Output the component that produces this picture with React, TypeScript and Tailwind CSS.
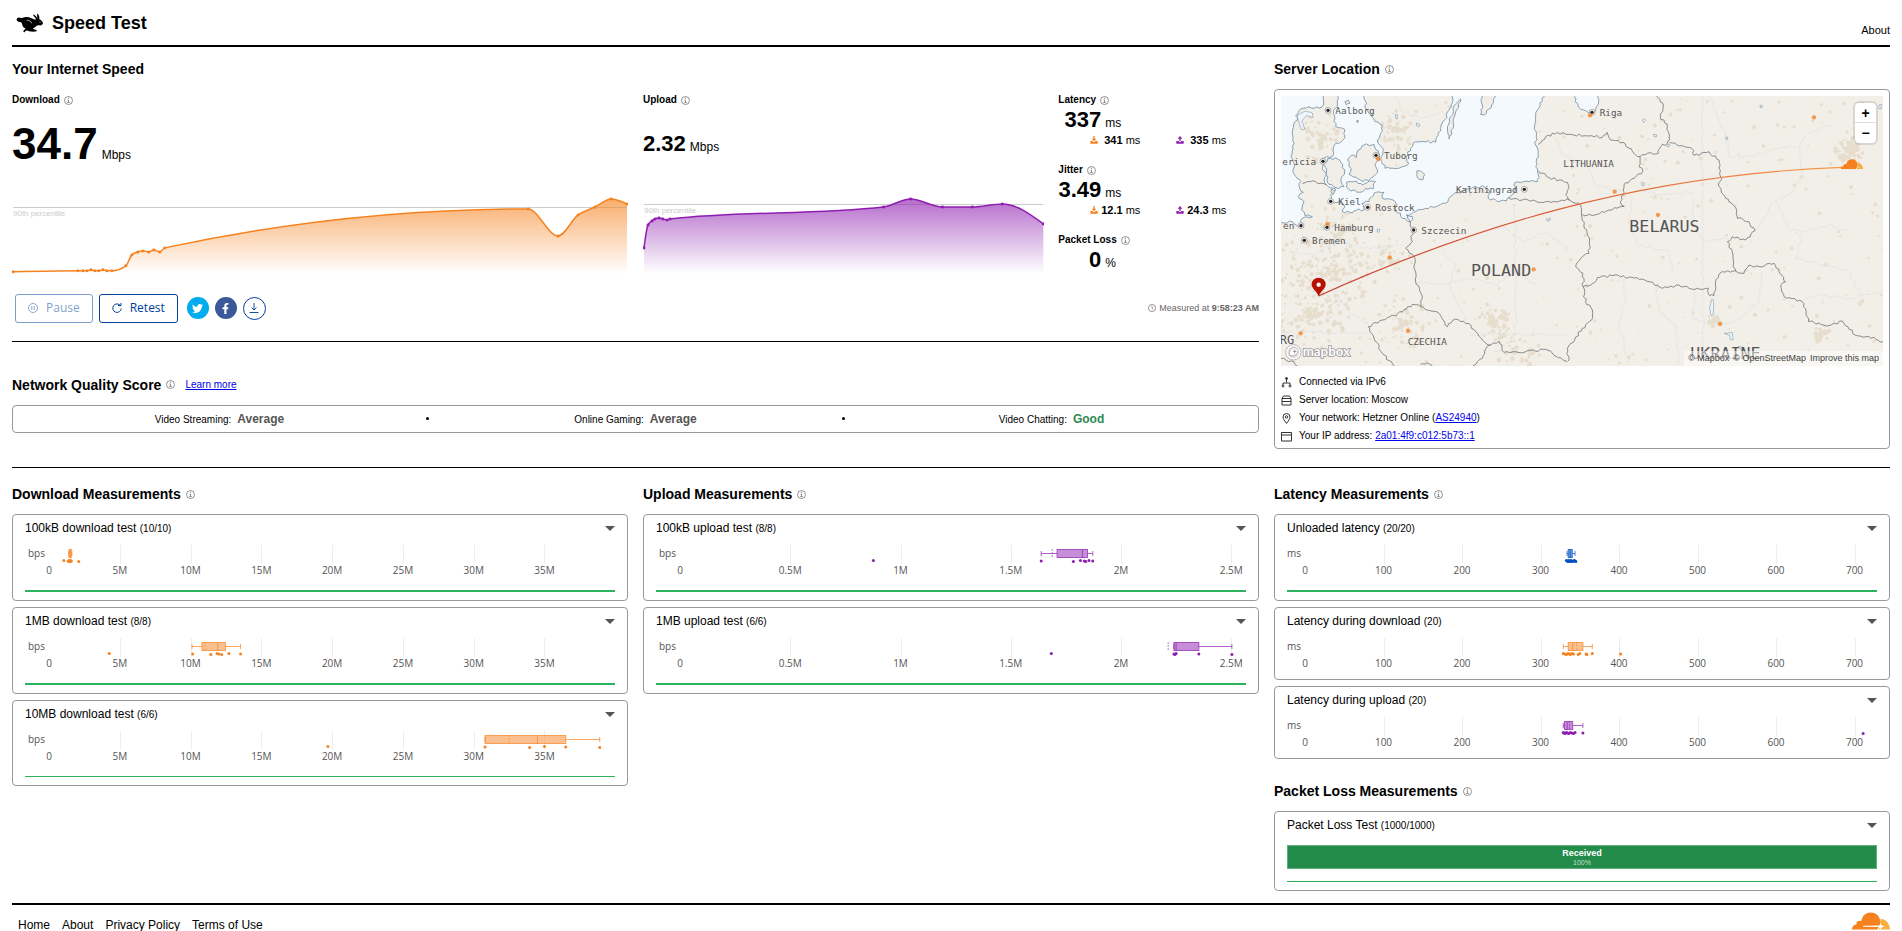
import type { ReactNode } from "react";
import { FaFacebookF, FaTwitter } from "react-icons/fa";

/* ------------------------------------------------------------------ */
/*  Types and data                                                    */
/* ------------------------------------------------------------------ */

type Point = [number, number];

interface Stats {
  low: number;
  q1: number;
  median: number;
  mean: number;
  q3: number;
  high: number;
}

interface Scale {
  unit: string;
  origin: number;
  perUnit: number;
  ticks: { value: number; label: string }[];
}

interface Measurement {
  title: string;
  count: string;
  scale: Scale;
  color: string;
  stats: Stats;
  dots: number[];
  progress?: "thick" | "thin";
}

const ORANGE = "#f6821f";
const PURPLE = "#8e1eb0";
const BLUE = "#0051c3";

const downloadScale: Scale = {
  unit: "bps",
  origin: 24,
  perUnit: 14.157,
  ticks: [0, 5, 10, 15, 20, 25, 30, 35].map((v) => ({
    value: v,
    label: v ? `${v}M` : "0",
  })),
};

const uploadScale: Scale = {
  unit: "bps",
  origin: 24,
  perUnit: 220.5,
  ticks: [0, 0.5, 1, 1.5, 2, 2.5].map((v) => ({
    value: v,
    label: v ? `${v}M` : "0",
  })),
};

const latencyScale: Scale = {
  unit: "ms",
  origin: 18,
  perUnit: 0.785,
  ticks: [0, 100, 200, 300, 400, 500, 600, 700].map((v) => ({
    value: v,
    label: `${v}`,
  })),
};

const downloads: Measurement[] = [
  {
    title: "100kB download test",
    count: "(10/10)",
    scale: downloadScale,
    color: ORANGE,
    stats: { low: 1.38, q1: 1.42, median: 1.48, mean: 1.5, q3: 1.58, high: 1.62 },
    dots: [1.05, 1.35, 1.4, 1.42, 1.48, 1.5, 1.52, 1.58, 2.1],
    progress: "thick",
  },
  {
    title: "1MB download test",
    count: "(8/8)",
    scale: downloadScale,
    color: ORANGE,
    stats: { low: 10.1, q1: 10.8, median: 11.92, mean: 11.03, q3: 12.47, high: 13.53 },
    dots: [4.25, 10.15, 11.43, 11.87, 12, 12.2, 12.7, 13.53],
    progress: "thick",
  },
  {
    title: "10MB download test",
    count: "(6/6)",
    scale: downloadScale,
    color: ORANGE,
    stats: { low: 30.8, q1: 30.8, median: 34.5, mean: 32.5, q3: 36.5, high: 38.9 },
    dots: [19.7, 30.8, 33.95, 35, 36.5, 38.9],
    progress: "thin",
  },
];

const uploads: Measurement[] = [
  {
    title: "100kB upload test",
    count: "(8/8)",
    scale: uploadScale,
    color: PURPLE,
    stats: { low: 1.638, q1: 1.71, median: 1.825, mean: 1.688, q3: 1.848, high: 1.872 },
    dots: [0.877, 1.638, 1.784, 1.816, 1.834, 1.84, 1.855, 1.872],
    progress: "thick",
  },
  {
    title: "1MB upload test",
    count: "(6/6)",
    scale: uploadScale,
    color: PURPLE,
    stats: { low: 2.24, q1: 2.24, median: 2.25, mean: 2.214, q3: 2.353, high: 2.503 },
    dots: [1.684, 2.24, 2.245, 2.25, 2.353, 2.503],
    progress: "thick",
  },
];

const latencies: Measurement[] = [
  {
    title: "Unloaded latency",
    count: "(20/20)",
    scale: latencyScale,
    color: BLUE,
    stats: { low: 333.8, q1: 335.3, median: 337.5, mean: 338.5, q3: 340.5, high: 344 },
    dots: [333, 334, 335, 336, 337, 338, 339, 340, 341, 343, 344, 345],
    progress: "thick",
  },
  {
    title: "Latency during download",
    count: "(20)",
    scale: latencyScale,
    color: ORANGE,
    stats: { low: 329, q1: 335.3, median: 341, mean: 346, q3: 354, high: 366 },
    dots: [329, 331, 333, 335, 337, 338, 340, 342, 348, 350, 358, 359, 366, 402],
  },
  {
    title: "Latency during upload",
    count: "(20)",
    scale: latencyScale,
    color: PURPLE,
    stats: { low: 329, q1: 330.5, median: 334, mean: 337, q3: 341, high: 354 },
    dots: [329, 330, 331, 333, 334, 336, 338, 340, 342, 344, 354, 711],
  },
];

const downloadSeries: Point[] = [
  [13, 271], [78, 270], [83, 270], [87, 270], [91, 269], [95, 270], [99, 270],
  [103, 269], [107, 270], [112, 270], [126, 265], [132, 254], [138, 251],
  [143, 250], [149, 251], [154, 249], [160, 251], [165, 247], [529, 208],
  [559, 235], [579, 214], [596, 206], [612, 198], [628, 203],
];

const uploadSeries: Point[] = [
  [644, 247], [648, 224], [652, 220], [655, 218], [659, 217], [663, 218],
  [667, 219], [670, 218], [884, 206], [911, 198], [943, 206], [973, 206],
  [1003, 203], [1044, 223],
];

/* ------------------------------------------------------------------ */
/*  Curve helpers                                                     */
/* ------------------------------------------------------------------ */

// Monotone cubic interpolation through the points
function monotone(points: Point[]): string {
  const n = points.length;
  const slope = (a: Point, b: Point) => (b[1] - a[1]) / (b[0] - a[0]);
  const t = points.map((p, i) => {
    if (i === 0 || i === n - 1) return 0;
    const h0 = p[0] - points[i - 1][0];
    const h1 = points[i + 1][0] - p[0];
    const s0 = slope(points[i - 1], p);
    const s1 = slope(p, points[i + 1]);
    const mid = (s0 * h1 + s1 * h0) / (h0 + h1);
    return (
      (Math.sign(s0) + Math.sign(s1)) *
      Math.min(Math.abs(s0), Math.abs(s1), 0.5 * Math.abs(mid))
    );
  });
  t[0] = (3 * slope(points[0], points[1]) - t[1]) / 2;
  t[n - 1] = (3 * slope(points[n - 2], points[n - 1]) - t[n - 2]) / 2;

  let d = `M${points[0][0]} ${points[0][1]}`;
  for (let i = 1; i < n; i++) {
    const [x0, y0] = points[i - 1];
    const [x1, y1] = points[i];
    const dx = (x1 - x0) / 3;
    d += `C${x0 + dx} ${y0 + dx * t[i - 1]} ${x1 - dx} ${y1 - dx * t[i]} ${x1} ${y1}`;
  }
  return d;
}

function random(seed: number) {
  let s = seed;
  return () => {
    s = (s * 16807) % 2147483647;
    return s / 2147483647;
  };
}

// Turns "x,y x,y ..." into a jagged coast or border line
function rough(list: string, amp: number, close = false): string {
  const pts = list.split(" ").map((p) => p.split(",").map(Number) as Point);
  if (close) pts.push(pts[0]);
  const rnd = random(list.length * 7919 + pts[0][0]);
  let d = `M${pts[0][0]} ${pts[0][1]}`;
  for (let i = 1; i < pts.length; i++) {
    const [x0, y0] = pts[i - 1];
    const [x1, y1] = pts[i];
    const len = Math.hypot(x1 - x0, y1 - y0);
    const steps = Math.max(1, Math.round(len / 8));
    for (let k = 1; k < steps; k++) {
      const f = k / steps;
      const off = (rnd() - 0.5) * 2 * amp;
      const x = x0 + (x1 - x0) * f - ((y1 - y0) / len) * off;
      const y = y0 + (y1 - y0) * f + ((x1 - x0) / len) * off;
      d += `L${x.toFixed(1)} ${y.toFixed(1)}`;
    }
    d += `L${x1} ${y1}`;
  }
  return close ? d + "Z" : d;
}

/* ------------------------------------------------------------------ */
/*  Small parts                                                       */
/* ------------------------------------------------------------------ */

function InfoIcon() {
  return (
    <svg viewBox="0 0 18 18" className="h-[9px] w-[9px] shrink-0" fill="none" stroke="#777" strokeWidth="1.6" aria-hidden="true">
      <circle cx="9" cy="9" r="8" />
      <path d="M7 8h2v5M6.500 13h5" />
      <path d="M8 4.500h2" strokeWidth="2" />
    </svg>
  );
}

function Heading({ children }: { children: ReactNode }) {
  return (
    <h2 className="flex items-center gap-[5px] text-sm leading-5 font-bold">
      {children}
      <InfoIcon />
    </h2>
  );
}

function Label({ children }: { children: ReactNode }) {
  return (
    <h3 className="flex items-center gap-1 text-[10px] leading-4 font-bold">
      {children}
      <InfoIcon />
    </h3>
  );
}

function RabbitLogo() {
  return (
    <svg viewBox="46 38 84 60" className="h-5 w-7" aria-hidden="true">
      <path d="M48 60c-1-6 4-10 9-8 3 0 5 1 7 1 9-4 20-4 27 0 5 2 8 4 12 5l3-3c-4-4-8-8-9-13 6 2 10 7 13 11-1-5-1-9 0-14 5 4 7 11 6 18 5 2 9 6 11 11-1 5-5 8-11 7-4 0-6 1-8 1-3 3-6 6-11 8 2 3 4 4 8 4 3 0 4 3 3 5-8 2-16 1-23 0-3-2-6-3-8-2-3 0-4 2-5 5-2 0-4-1-4-3 1-4 5-7 8-8-5-2-8-4-10-8-1-4-2-8-5-11-5 0-11-2-13-6z" />
      <path d="M78 60c7-1 13 2 15 9" fill="none" stroke="#fff" strokeWidth="2" />
      <circle cx="118" cy="65" r="1.500" fill="#fff" />
    </svg>
  );
}

function CloudMark({ className }: { className: string }) {
  return (
    <svg viewBox="0 0 112 52" className={className} aria-hidden="true">
      <path d="M0 51c0-9 5-14 13-15-1-8 7-13 14-9C31 9 42 1 55 1c15 0 25 9 28 23 3 6 1 12-1 15L33 40v3l46 1-5 7z" fill="#f6821f" />
      <path d="M84 20c15-1 27 12 28 31H78l6-9 8-1-7-3z" fill="#fbad41" />
      <path d="m84 31 3 8 9 3-9 3-3 7-3-7-6-3 6-3z" fill="#fff" />
    </svg>
  );
}

function TransferIcon({ up, color }: { up?: boolean; color: string }) {
  return (
    <svg viewBox="0 0 24 24" className="h-2 w-2" fill={color} aria-hidden="true">
      <path d="M1 15h6l5 4 5-4h6v8H1z" />
      <path d={up ? "M12 0l7 8h-5v7h-4V8H5z" : "M10 0h4v8h5l-7 8-7-8h5z"} />
    </svg>
  );
}

/* ------------------------------------------------------------------ */
/*  Speed charts                                                      */
/* ------------------------------------------------------------------ */

interface AreaChartProps {
  id: string;
  points: Point[];
  color: string;
  viewBox: string;
  percentile: number;
}

function AreaChart({ id, points, color, viewBox, percentile }: AreaChartProps) {
  const line = monotone(points);
  const first = points[0][0];
  const last = points[points.length - 1][0];
  return (
    <svg viewBox={viewBox} className="block h-auto w-full">
      <defs>
        <linearGradient id={id} x1="0" x2="0" y1="198" y2="273" gradientUnits="userSpaceOnUse">
          <stop offset="0" stopColor={color} stopOpacity="0.65" />
          <stop offset="1" stopColor={color} stopOpacity="0" />
        </linearGradient>
      </defs>
      <path d={`M${first} ${percentile + 0.5}H${last}`} stroke="#ccc" />
      <text x={first} y={percentile + 9} fill="#ccc" fontSize="8">
        90th percentile
      </text>
      <path d={`${line}V273H${first}Z`} fill={`url(#${id})`} />
      <path d={line} fill="none" stroke={color} strokeWidth="1.500" />
      {points.map(([x, y]) => (
        <circle key={x} cx={x} cy={y} r="1.500" fill={color} />
      ))}
    </svg>
  );
}

function SpeedResult({ label, children, chart }: { label: string; children: ReactNode; chart: ReactNode }) {
  return (
    <div>
      <Label>{label}</Label>
      <div className="flex h-[76px] items-center pb-1">{children}</div>
      {chart}
    </div>
  );
}

interface LatencyResultProps {
  label: string;
  value: string;
  unit: string;
  down?: string;
  up?: string;
}

function LatencyResult({ label, value, unit, down, up }: LatencyResultProps) {
  return (
    <div>
      <Label>{label}</Label>
      <p className="flex items-baseline gap-1 leading-6">
        <span className="w-[43px] text-right text-[22px] font-bold">{value}</span>
        <span className="text-xs">{unit}</span>
      </p>
      {down && up && (
        <div className="flex gap-9 pl-8 text-[11px] leading-4">
          <p className="flex w-[50px] items-center justify-between whitespace-nowrap">
            <TransferIcon color={ORANGE} />
            <span><b>{down}</b> ms</span>
          </p>
          <p className="flex w-[50px] items-center justify-between whitespace-nowrap">
            <TransferIcon up color={PURPLE} />
            <span><b>{up}</b> ms</span>
          </p>
        </div>
      )}
    </div>
  );
}

/* ------------------------------------------------------------------ */
/*  Measurement cards                                                 */
/* ------------------------------------------------------------------ */

function BoxPlot({ scale, stats, dots, color }: Measurement) {
  const x = (v: number) => scale.origin + v * scale.perUnit;
  return (
    <svg viewBox="0 0 590 34" className="mt-2 block h-auto w-full font-['Open_Sans',sans-serif]">
      <g fill="#555" fontSize="10">
        <text x={scale.origin - 4} y="13" textAnchor="end">{scale.unit}</text>
        {scale.ticks.map((t) => (
          <text key={t.label} x={x(t.value)} y="30" textAnchor="middle">{t.label}</text>
        ))}
      </g>
      {scale.ticks.slice(1).map((t) => (
        <path key={t.label} d={`M${Math.round(x(t.value)) + 0.5} 1v19`} stroke="#eee" />
      ))}
      <g stroke={color} strokeOpacity="0.7">
        <path d={`M${x(stats.low)} 9.500H${x(stats.q1)}M${x(stats.q3)} 9.500H${x(stats.high)}M${x(stats.low)} 7v5M${x(stats.high)} 7v5`} />
        <rect x={x(stats.q1)} y="5.500" width={x(stats.q3) - x(stats.q1)} height="8" fill={color} fillOpacity="0.5" />
        <path d={`M${x(stats.median)} 6v8`} />
        <path d={`M${x(stats.mean)} 5v9`} strokeDasharray="2 1" strokeOpacity="0.6" />
      </g>
      {dots.map((v, i) => (
        <circle key={i} cx={x(v)} cy={16.5 + (i % 3) * 0.5} r="1.500" fill={color} />
      ))}
    </svg>
  );
}

function Card({ title, count, children }: { title: string; count: string; children: ReactNode }) {
  return (
    <section className="rounded border border-[#999] px-3 pt-[5px] pb-2">
      <div className="flex items-center justify-between">
        <h3 className="text-xs leading-4">
          {title} <span className="text-[10px] leading-none">{count}</span>
        </h3>
        <button aria-label={`Show details of ${title}`}>
          <svg viewBox="0 0 10 5" className="h-[5px] w-2.5" fill="#555">
            <path d="M0 0h10L5 5z" />
          </svg>
        </button>
      </div>
      {children}
    </section>
  );
}

function MeasurementCard(props: Measurement) {
  return (
    <Card title={props.title} count={props.count}>
      <BoxPlot {...props} />
      {props.progress === "thick" && <div className="mt-3 h-0.5 bg-[#2db35e]" />}
      {props.progress === "thin" && <div className="mt-3 h-px bg-[#2db35e]" />}
    </Card>
  );
}

/* ------------------------------------------------------------------ */
/*  Server map                                                        */
/* ------------------------------------------------------------------ */

const SEAS = [
  "25,20 165,20 163,45 158,66 135,70 120,65 95,72 80,92 85,105 74,120 72,190 66,215 75,235 72,262 95,290 92,310 103,322 88,335 105,350 98,375 108,392 130,395 100,400 90,428 70,410 45,414 25,410",
  "205,20 205,55 193,85 200,125 226,132 228,152 215,172 196,180 190,215 165,220 160,250 170,262 165,285 178,305 200,312 185,330 186,350 205,352 225,360 220,380 250,384 262,376 285,375 278,355 290,348 300,350 315,325 345,322 340,340 372,345 385,362 378,378 395,385 400,400 425,410 430,395 412,390 470,370 530,355 550,330 600,312 640,302 660,315 658,340 685,350 712,348 735,325 738,292 805,290 808,270 800,245 808,215 800,180 800,110 805,75 830,20 555,20 540,75 515,130 500,172 440,170 425,190 410,215 420,235 400,245 348,250 335,222 342,200 325,165 335,145 340,122 318,110 300,85 290,70 290,50 275,20",
  "915,20 918,50 935,72 960,84 978,80 988,58 988,20",
];

const ISLANDS = [
  "166,232 185,220 205,222 222,240 226,268 216,290 225,305 200,308 180,298 172,270",
  "236,225 248,210 262,218 268,195 285,180 315,178 330,205 332,225 318,240 326,262 305,280 282,290 268,282 240,268 246,250",
  "232,292 262,288 282,300 300,288 320,290 312,312 290,310 272,322 238,312",
  "575,42 560,80 552,130 540,162 536,140 545,95 562,55",
  "636,20 640,60 635,88 645,90 668,60 680,20",
  "443,258 455,258 467,268 462,284 445,278",
  "228,50 238,46 243,54 232,60",
  "262,108 268,106 266,114",
  "187,312 197,318 193,328 186,322",
];

const LAKES = [
  "380,88 386,90 384,102 379,98",
  "442,114 452,118 450,126 443,122",
  "85,90 110,78 130,84 132,98 112,92 98,108 108,132 98,135 90,112",
  "1120,105 1127,101 1130,106 1124,113",
  "1154,148 1162,149 1163,155 1155,155",
  "1195,177 1202,178 1200,186 1194,184",
  "1474,60 1480,62 1479,68 1473,67",
  "1370,157 1376,156 1376,163 1371,164",
  "1118,292 1127,295 1124,303 1118,300",
  "832,402 844,400 842,407 835,408",
  "1328,643 1334,645 1333,690 1327,692 1322,670",
  "1365,745 1390,743 1392,765 1384,764 1382,750",
  "325,432 333,434 330,442 324,440",
  "1408,784 1425,788 1420,798",
  "1830,60 1838,58 1836,72 1829,70",
];

const BORDERS = [
  "808,178 830,155 865,142 900,148 968,152 1000,157 1014,142 1025,165 1062,172 1095,205 1113,215",
  "1162,33 1182,55 1174,95 1195,125 1202,165 1195,175 1175,185 1168,205 1135,205 1113,215 1110,245 1122,258 1095,280 1065,300 1062,330 1054,350 1066,364 1052,366 1020,375 985,388 938,388",
  "1202,172 1240,182 1268,190 1275,212 1320,200 1350,225 1358,280 1348,300 1370,340 1402,372 1405,400 1440,410 1458,437 1430,465 1390,455 1375,470 1392,510 1392,545 1400,558",
  "1400,558 1360,560 1340,590 1335,632 1322,632 1318,610 1260,610 1230,600 1180,610 1120,582 1030,572 985,578 965,600 942,605",
  "1400,558 1425,565 1440,540 1470,545 1515,535 1530,560 1550,590 1535,600 1545,635 1600,650 1618,710 1680,722 1720,708 1758,750 1800,755 1842,770",
  "718,338 760,345 830,350 903,345",
  "808,258 840,278 895,292 900,310 890,330 905,348 935,360 945,420 962,465 960,505 935,520 920,545 942,565 942,605 950,650 970,675 968,705 940,730 895,790 898,828",
  "416,390 430,430 430,470 410,490 435,515 440,590 460,640 455,665",
  "455,665 430,658 400,680 340,705 298,725 315,760 345,810 375,843",
  "455,665 510,685 535,725 560,702 600,715 620,740 640,765 665,780 690,768 705,802 740,800 770,800 830,793 868,818 895,830",
  "665,780 650,792 640,820 612,842",
  "100,295 140,290 172,300",
  "36,820 75,830 85,843",
  "455,838 475,834 490,842",
];

const REGIONS = [
  "620,33 630,70 600,110 640,130",
  "380,33 400,80 460,100 520,80",
  "1320,33 1345,90 1370,150 1380,215 1450,215 1520,190 1590,185 1620,140 1690,120",
  "1590,185 1600,270 1560,330 1510,350 1480,410 1460,437",
  "860,160 880,210 960,250 980,300 1060,320",
  "1090,340 1080,420 1110,480 1200,500 1210,570",
  "1120,320 1200,330 1270,320 1275,420 1300,470 1380,460",
  "1520,345 1560,430 1600,440 1680,420 1740,440",
  "1600,440 1580,520 1660,540 1740,560 1780,640",
  "1060,580 1070,640 1050,720 1080,840",
  "1160,600 1170,680 1220,720 1230,840",
  "1280,610 1270,700 1330,720 1400,710 1470,650",
  "1470,650 1480,560",
  "1600,650 1640,630 1740,640 1842,620",
  "520,500 560,540 540,600 580,680 590,710",
  "440,590 520,600 600,580 680,600 740,560 800,600",
  "740,33 739,300",
  "739,360 739,740",
  "36,740 300,745",
  "600,748 900,750",
  "640,440 700,420 760,470 830,440 900,500",
  "230,500 250,560 200,620 240,680 300,720",
  "60,500 130,510 200,470 300,490 400,480",
  "1300,33 1302,843",
];

// Population patches: centre, spread and how many
const PATCHES: [number, number, number, number][] = [
  [170, 560, 150, 190],
  [120, 690, 110, 120],
  [210, 440, 90, 50],
  [360, 520, 40, 40],
  [400, 710, 80, 70],
  [670, 715, 50, 80],
  [730, 800, 90, 60],
  [1735, 195, 45, 110],
  [1330, 705, 18, 30],
  [1650, 745, 25, 30],
  [150, 170, 60, 50],
  [380, 130, 70, 60],
  [290, 210, 30, 25],
  [110, 130, 40, 15],
];

function patchPath(): string {
  const rnd = random(4242);
  let d = "";
  const add = (x: number, y: number, s: number) => {
    d += `M${x.toFixed(0)} ${y.toFixed(0)}l${s.toFixed(1)} ${(-s / 2).toFixed(1)} ${(s / 2).toFixed(1)} ${s.toFixed(1)} ${(-s).toFixed(1)} ${(s / 2).toFixed(1)}z`;
  };
  for (const [cx, cy, spread, count] of PATCHES) {
    for (let i = 0; i < count; i++) {
      const a = rnd() * Math.PI * 2;
      const r = rnd() * spread;
      add(cx + Math.cos(a) * r, cy + Math.sin(a) * r, 3 + rnd() * 8);
    }
  }
  for (let i = 0; i < 330; i++) {
    add(36 + rnd() * 1806, 33 + rnd() * 810, 3 + rnd() * 7);
  }
  return d;
}

const CITIES: { name: string; x: number; y: number; dot: Point; end?: boolean }[] = [
  { name: "Aalborg", x: 199, y: 87, dot: [177, 76] },
  { name: "Tuborg", x: 345, y: 222, dot: [321, 211] },
  { name: "ericia", x: 141, y: 239, dot: [162, 229], end: true },
  { name: "Kiel", x: 208, y: 359, dot: [185, 349] },
  { name: "Rostock", x: 319, y: 377, dot: [296, 367] },
  { name: "en", x: 76, y: 433, dot: [96, 422], end: true },
  { name: "Hamburg", x: 196, y: 438, dot: [174, 427] },
  { name: "Bremen", x: 129, y: 476, dot: [106, 466] },
  { name: "Szczecin", x: 457, y: 446, dot: [434, 435] },
  { name: "Kaliningrad", x: 746, y: 323, dot: [766, 313], end: true },
  { name: "Riga", x: 992, y: 93, dot: [969, 82] },
];

const COLOS: Point[] = [
  [327, 222], [176, 417], [362, 517], [794, 553], [95, 745], [417, 738],
  [963, 91], [1037, 320], [1167, 390], [1353, 717], [1635, 97],
];

function ServerMap() {
  return (
    <div className="relative overflow-hidden">
      <svg
        viewBox="36 33 1806 810"
        className="block h-auto w-full bg-[#f2efe9] font-['DejaVu_Sans_Mono',monospace]"
        role="img"
        aria-label="Map with the server and your location"
      >
        <defs>
          <linearGradient id="route" x1="150" x2="1720" y1="0" y2="0" gradientUnits="userSpaceOnUse">
            <stop offset="0" stopColor="#c8372d" />
            <stop offset="0.5" stopColor="#e0623b" />
            <stop offset="1" stopColor="#f79a4b" />
          </linearGradient>
        </defs>
        <path d={patchPath()} fill="#e6ddcd" />
        <g fill="none" stroke="#e6e5e5" strokeWidth="3">
          {REGIONS.map((r) => <path key={r} d={rough(r, 4)} />)}
        </g>
        <g stroke="#87a0b0" strokeWidth="3" strokeLinejoin="round">
          {SEAS.map((s) => <path key={s} d={rough(s, 4, true)} fill="#f4f9fd" />)}
          {ISLANDS.map((s) => <path key={s} d={rough(s, 4, true)} fill="#f1eee7" />)}
          {LAKES.map((s) => <path key={s} d={rough(s, 1, true)} fill="#eef5fa" strokeWidth="2" />)}
        </g>
        <g fill="none" stroke="#777" strokeWidth="2.500" strokeLinejoin="round">
          {BORDERS.map((b) => <path key={b} d={rough(b, 4)} />)}
        </g>

        <g fill="#555" fontSize="28">
          {CITIES.map((c) => (
            <g key={c.name}>
              <circle cx={c.dot[0]} cy={c.dot[1]} r="9" fill="#f4f4f2" stroke="#888" strokeWidth="2" />
              <circle cx={c.dot[0]} cy={c.dot[1]} r="5" fill="#222" />
              <text x={c.x} y={c.y} textAnchor={c.end ? "end" : "start"}>{c.name}</text>
            </g>
          ))}
          <text x="883" y="246">LITHUANIA</text>
          <text x="416" y="779">CZECHIA</text>
        </g>
        <g fill="#555" fontSize="50">
          <text x="606" y="573">POLAND</text>
          <text x="1081" y="440">BELARUS</text>
          <text x="1264" y="822">UKRAINE</text>
          <text x="32" y="778" fontSize="36">RG</text>
        </g>

        <path d="M150 632C600 430 1100 270 1720 247" fill="none" stroke="url(#route)" strokeWidth="3.500" />
        {COLOS.map(([x, y]) => (
          <circle key={x} cx={x} cy={y} r="6.500" fill="#f6821f" fillOpacity="0.8" />
        ))}
        <path d="M149 634c-6-16-21-22-21-36a21 20 0 0 1 42 0c0 14-15 20-21 36z" fill="#b71100" />
        <circle cx="149" cy="599" r="6.500" fill="#fff" />
        <svg x="1715" y="222" width="68" height="31" viewBox="0 0 112 52">
          <path d="M0 51c0-9 5-14 13-15-1-8 7-13 14-9C31 9 42 1 55 1c15 0 25 9 28 23 3 6 1 12-1 15l-8 12z" fill="#f6821f" />
          <path d="M84 20c15-1 27 12 28 31H78l6-9 8-1-7-3z" fill="#fbad41" />
        </svg>

        {/* mapbox mark */}
        <circle cx="73" cy="802" r="20" fill="#ccc" fillOpacity="0.5" stroke="#fff" strokeWidth="5" />
        <circle cx="73" cy="802" r="23" fill="none" stroke="#999" strokeWidth="2" />
        <path d="M62 812c-3-14 4-24 15-24 8 0 12 8 9 15-4 8-13 10-24 9z" fill="#fff" stroke="#999" strokeWidth="2" />
        <path d="m77 792 2 5 5 2-5 2-2 5-2-5-5-2 5-2z" fill="#999" />
        <text x="101" y="812" fontSize="40" fontFamily="Lato, sans-serif" fontWeight="700" fill="#fff" stroke="#999" strokeWidth="5" paintOrder="stroke">
          mapbox
        </text>
      </svg>

      <div className="absolute top-[7px] right-[7px] flex w-[21px] flex-col divide-y divide-[#ddd] rounded-sm bg-white text-center text-sm leading-5 font-bold shadow-[0_0_0_2px_rgba(0,0,0,0.1)]">
        <button className="h-5" aria-label="Zoom in">+</button>
        <button className="h-5" aria-label="Zoom out">−</button>
      </div>
      <p className="absolute right-0 bottom-0 flex gap-1 bg-white/50 px-1 text-[9px] leading-[15px] text-[#404040]">
        <a href="#mapbox">© Mapbox</a>
        <a href="#osm">© OpenStreetMap</a>
        <a href="#improve">Improve this map</a>
      </p>
    </div>
  );
}

function InfoRow({ icon, children }: { icon: ReactNode; children: ReactNode }) {
  return (
    <li className="flex items-center gap-[7px]">
      <svg viewBox="0 0 22 22" className="h-[11px] w-[11px]" fill="none" stroke="#333" strokeWidth="2" aria-hidden="true">
        {icon}
      </svg>
      <span>{children}</span>
    </li>
  );
}

function Quality({ label, value, good }: { label: string; value: string; good?: boolean }) {
  return (
    <p className="flex flex-1 items-baseline justify-center gap-1.5 text-[10px]">
      {label}
      <b className={good ? "text-xs text-[#2c8a4f]" : "text-xs text-[#555]"}>{value}</b>
    </p>
  );
}

/* ------------------------------------------------------------------ */
/*  Page                                                              */
/* ------------------------------------------------------------------ */

export default function App() {
  return (
    <div className="min-h-screen bg-white px-3 font-['Liberation_Sans',Arial,sans-serif] text-black">
      {/* ---- HEADER ---- */}
      <header className="flex items-end justify-between border-b-2 border-black pt-2.5 pb-[7px]">
        <div className="flex items-center gap-2 pb-0.5">
          <div className="pl-1"><RabbitLogo /></div>
          <h1 className="text-lg leading-[26px] font-bold">Speed Test</h1>
        </div>
        <a href="#about" className="text-[11px] leading-4">About</a>
      </header>

      {/* ---- RESULTS ---- */}
      <main>
        <div className="grid grid-cols-3 gap-[15px] border-b border-black pt-3 pb-[18px]">
          <div className="col-span-2">
            <h2 className="text-sm leading-5 font-bold">Your Internet Speed</h2>
            <div className="mt-[13px] grid grid-cols-2 gap-[15px]">
              <SpeedResult
                label="Download"
                chart={<AreaChart id="down" points={downloadSeries} color={ORANGE} viewBox="12 183 617 90" percentile={206} />}
              >
                <p className="flex items-baseline gap-1 text-xs">
                  <span className="text-[44px] leading-[52px] font-bold">34.7</span>
                  Mbps
                </p>
              </SpeedResult>
              <div className="grid grid-cols-[2fr_1fr] gap-[14px]">
                <SpeedResult
                  label="Upload"
                  chart={<AreaChart id="up" points={uploadSeries} color={PURPLE} viewBox="643 183 402 90" percentile={203} />}
                >
                  <p className="flex items-baseline gap-1 text-xs">
                    <span className="text-[22px] leading-6 font-bold">2.32</span>
                    Mbps
                  </p>
                </SpeedResult>
                <div className="flex flex-col gap-[14px]">
                  <LatencyResult label="Latency" value="337" unit="ms" down="341" up="335" />
                  <LatencyResult label="Jitter" value="3.49" unit="ms" down="12.1" up="24.3" />
                  <LatencyResult label="Packet Loss" value="0" unit="%" />
                </div>
              </div>
            </div>

            {/* Controls */}
            <div className="mt-5 flex items-center justify-between border-b border-black pb-[18px] pl-[3px]">
              <div className="flex items-center gap-1.5 font-['Open_Sans',sans-serif] text-xs text-[#003f9a]">
                <button disabled className="flex h-[29px] items-center gap-2 rounded-[3px] border border-[#003f9a] px-3 opacity-50">
                  <svg viewBox="0 0 20 20" className="h-2.5 w-2.5" fill="none" stroke="currentColor" strokeWidth="1.800">
                    <circle cx="10" cy="10" r="9" />
                    <path d="M7.500 6v8M12.500 6v8" />
                  </svg>
                  Pause
                </button>
                <button className="flex h-[29px] items-center gap-2 rounded-[3px] border border-[#003f9a] px-3">
                  <svg viewBox="0 0 20 20" className="h-2.5 w-2.5" fill="none" stroke="currentColor" strokeWidth="2">
                    <path d="M17 5.500A8.500 8.500 0 1 0 18.500 11" />
                    <path d="M12 5h6V0" />
                  </svg>
                  Retest
                </button>
                <div className="ml-[3px] flex items-center gap-1.5">
                  <a href="#twitter" aria-label="Share on Twitter" className="flex h-[22px] w-[22px] items-center justify-center rounded-full bg-[#00aced] text-white">
                    <FaTwitter size={11} />
                  </a>
                  <a href="#facebook" aria-label="Share on Facebook" className="flex h-[22px] w-[22px] items-center justify-center rounded-full bg-[#3b5998] text-white">
                    <FaFacebookF size={11} />
                  </a>
                  <button aria-label="Download results" className="flex h-[23px] w-[23px] items-center justify-center rounded-full border border-[#003f9a]">
                    <svg viewBox="0 0 20 20" className="h-2.5 w-2.5" fill="none" stroke="currentColor" strokeWidth="1.800">
                      <path d="M10 0v14M5 9l5 5 5-5M1 19h18" />
                    </svg>
                  </button>
                </div>
              </div>
              <p className="flex items-center gap-[3px] text-[9px] leading-4 text-[#666]">
                <svg viewBox="0 0 18 18" className="h-2 w-2" fill="none" stroke="#888" strokeWidth="2" aria-hidden="true">
                  <circle cx="9" cy="9" r="8" />
                  <path d="M9 4v5l3 3" />
                </svg>
                <span>Measured at <b>9:58:23 AM</b></span>
              </p>
            </div>

            {/* Network quality */}
            <div className="mt-[33px] flex items-center gap-2.5">
              <Heading>Network Quality Score</Heading>
              <a href="#learn" className="text-[10px] leading-4 text-[#0000ee] underline">Learn more</a>
            </div>
            <div className="mt-2.5 flex h-7 items-center rounded border border-[#999]">
              <Quality label="Video Streaming:" value="Average" />
              <span className="h-[3px] w-[3px] rounded-full bg-black" />
              <Quality label="Online Gaming:" value="Average" />
              <span className="h-[3px] w-[3px] rounded-full bg-black" />
              <Quality label="Video Chatting:" value="Good" good />
            </div>
          </div>

          <div>
            <Heading>Server Location</Heading>
            <div className="mt-2.5 rounded border border-[#999] px-1.5 pt-1.5 pb-[3px]">
              <ServerMap />
              <ul className="mt-[7px] text-[10px] leading-[18px]">
                <InfoRow icon={<><circle cx="11" cy="3" r="2" fill="#333" /><path d="M11 4v7M4 16v-4h14v4" /><circle cx="4" cy="18" r="2" /><circle cx="18" cy="18" r="2" /></>}>
                  Connected via IPv6
                </InfoRow>
                <InfoRow icon={<path d="M5 2h12l3 5v13H2V7zM2 7h18M2 13h18" />}>
                  Server location: Moscow
                </InfoRow>
                <InfoRow icon={<><path d="M11 21C7 15 4 12 4 8a7 7 0 0 1 14 0c0 4-3 7-7 13z" /><circle cx="11" cy="8" r="2.500" /></>}>
                  Your network: Hetzner Online (<a href="#as24940" className="text-[#0000ee] underline">AS24940</a>)
                </InfoRow>
                <InfoRow icon={<path d="M1 3h20v17H1zM1 8h20" />}>
                  Your IP address: <a href="#ip" className="text-[#0000ee] underline">2a01:4f9:c012:5b73::1</a>
                </InfoRow>
              </ul>
            </div>
          </div>
        </div>

        {/* ---- MEASUREMENTS ---- */}
        <div className="grid grid-cols-3 items-start gap-[15px] pt-4">
          <div>
            <Heading>Download Measurements</Heading>
            <div className="mt-2.5 flex flex-col gap-1.5">
              {downloads.map((m) => <MeasurementCard key={m.title} {...m} />)}
            </div>
          </div>
          <div>
            <Heading>Upload Measurements</Heading>
            <div className="mt-2.5 flex flex-col gap-1.5">
              {uploads.map((m) => <MeasurementCard key={m.title} {...m} />)}
            </div>
          </div>
          <div>
            <Heading>Latency Measurements</Heading>
            <div className="mt-2.5 mb-[22px] flex flex-col gap-1.5">
              {latencies.map((m) => <MeasurementCard key={m.title} {...m} />)}
            </div>
            <Heading>Packet Loss Measurements</Heading>
            <div className="mt-2.5">
              <Card title="Packet Loss Test" count="(1000/1000)">
                <div className="mt-3 flex h-6 flex-col items-center justify-center border border-[#5fb07d] bg-[#238c4b] text-white">
                  <span className="text-[9px] leading-[11px] font-bold">Received</span>
                  <span className="text-[7px] leading-[8px] opacity-70">100%</span>
                </div>
                <div className="mt-3 h-px bg-[#2db35e]" />
              </Card>
            </div>
          </div>
        </div>
      </main>

      {/* ---- FOOTER ---- */}
      <footer className="mt-3 flex items-start justify-between border-t-2 border-black">
        <nav className="flex gap-3 px-1.5 pt-3 text-xs leading-4">
          <a href="#home">Home</a>
          <a href="#about">About</a>
          <a href="#privacy">Privacy Policy</a>
          <a href="#terms">Terms of Use</a>
        </nav>
        <div className="flex flex-col items-end pt-[7px]">
          <CloudMark className="h-[18px] w-[38px]" />
          <span className="text-[11px] leading-3 font-bold text-[#404041]">CLOUDFLARE</span>
        </div>
      </footer>
    </div>
  );
}
